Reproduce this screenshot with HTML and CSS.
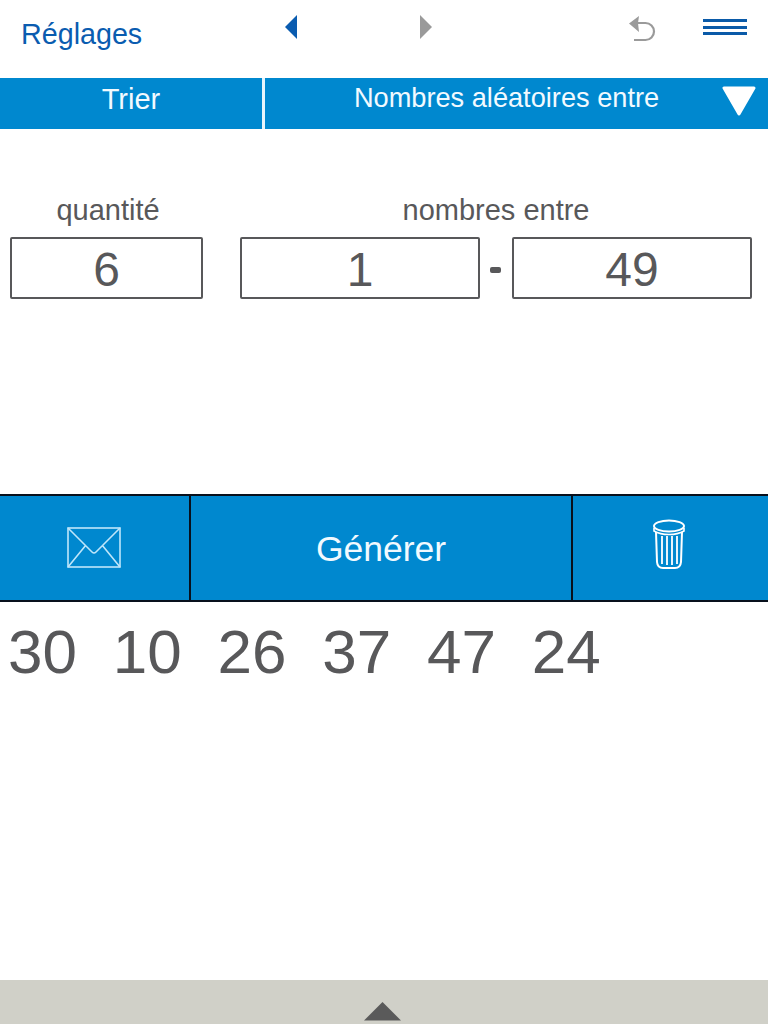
FILE: index.html
```html
<!DOCTYPE html>
<html lang="fr">
<head>
    <meta charset="UTF-8">
    <meta name="viewport" content="width=device-width, initial-scale=1.0">
    <title>Nombres aléatoires</title>
    <link rel="stylesheet" href="styles.css">
</head>
<body>
    <div class="page">
        <div class="toolbar">
            <div class="settings">Réglages</div>
            <svg class="tool" width="14" height="26" viewBox="0 0 14 26"><path d="M13 1V25L1 13Z" fill="#0a5cb0"/></svg>
            <svg class="tool" width="14" height="26" viewBox="0 0 14 26"><path d="M1 1V25L13 13Z" fill="#9a9a9a"/></svg>
            <svg class="tool" width="29" height="28" viewBox="0 0 29 28"><path d="M10 9H18.500A8.500 8.500 0 0 1 18.500 26H7" fill="none" stroke="#9a9a9a" stroke-width="2.200"/><path d="M12 2L11 9L12 18L2 9.500Z" fill="#9a9a9a"/></svg>
            <div class="menu"><span></span><span></span><span></span></div>
        </div>

        <div class="tabs">
            <div class="tab-sort">Trier</div>
            <div class="tab-mode">
                <span class="tab-title">Nombres aléatoires entre</span>
                <svg class="tab-arrow" width="34" height="30" viewBox="0 0 34 30"><path d="M2 2H32L17 28Z" fill="#fff" stroke="#fff" stroke-width="3" stroke-linejoin="round"/></svg>
            </div>
        </div>

        <div class="fields">
            <div class="field-qty">
                <div class="field-label field-label-qty">quantité</div>
                <div class="box">6</div>
            </div>
            <div class="field-range">
                <div class="field-label">nombres entre</div>
                <div class="range-row">
                    <div class="box">1</div>
                    <div class="dash"></div>
                    <div class="box">49</div>
                </div>
            </div>
        </div>

        <div class="actions">
            <div class="action action-mail">
                <svg width="54" height="42" viewBox="0 0 54 42" fill="none" stroke="#bfe6fa" stroke-width="1.600"><rect x="1" y="1" width="52" height="39"/><path d="M1 1L25 25Q27 27 29 25L53 1M1 40L19 18M53 40L35 18"/></svg>
            </div>
            <div class="action action-main">Générer</div>
            <div class="action action-trash">
                <svg width="34" height="52" viewBox="0 0 34 52" fill="none" stroke="#fff" stroke-width="2"><ellipse cx="17" cy="7" rx="15" ry="5.500"/><path d="M2 9V12Q8 15.500 17 15.500Q26 15.500 32 12V9" stroke-width="1.600"/><path d="M4 13L5 43Q5.500 49 11 49H23Q28.500 49 29 43L30 13"/><path d="M10 17V45M15 17V46M20 17V46M25 17V45" stroke-width="1.800"/></svg>
            </div>
        </div>

        <div class="results">
            <span>30</span><span>10</span><span>26</span><span>37</span><span>47</span><span>24</span>
        </div>

        <div class="drawer">
            <svg width="38" height="20" viewBox="0 0 38 20"><path d="M18.500 1L37 19.500H0Z" fill="#5a5a5a"/></svg>
        </div>
    </div>
</body>
</html>
```

FILE: styles.css
```css
body {
    margin: 0;
    font-family: 'Liberation Sans', Arial, sans-serif;
    background: #fff;
    color: #58585a;
}

.page {
    display: flex;
    flex-direction: column;
    height: 100vh;
    overflow: hidden;
}

/* Top bar */
.toolbar {
    display: grid;
    grid-template-columns: 284px 135px 208px 76px 1fr;
    align-items: start;
    height: 78px;
    flex-shrink: 0;
}

.settings {
    padding: 17px 0 0 21px;
    font-size: 28.700px;
    line-height: 34px;
    color: #0a5cb0;
}

.tool {
    display: block;
    margin-top: 14px;
}

.menu {
    display: flex;
    flex-direction: column;
    gap: 3.500px;
    width: 44px;
    margin-top: 19px;
}

.menu span {
    height: 3px;
    background: #0a5aa8;
}

/* Blue tabs */
.tabs {
    display: flex;
    height: 51px;
    flex-shrink: 0;
    background: #0088cf;
    color: #f2faff;
}

.tab-sort {
    width: 262px;
    border-right: 3px solid #e8f5fc;
    font-size: 29px;
    line-height: 43px;
    text-align: center;
}

.tab-mode {
    position: relative;
    flex: 1;
    text-align: center;
    line-height: 40px;
    padding-right: 20px;
}

.tab-title {
    font-size: 27.200px;
}

.tab-arrow {
    position: absolute;
    top: 8px;
    right: 12px;
}

/* Input fields */
.fields {
    display: flex;
    gap: 37px;
    height: 365px;
    flex-shrink: 0;
    padding-left: 10px;
    box-sizing: border-box;
}

.field-qty {
    width: 193px;
}

.field-range {
    width: 512px;
}

.field-label {
    margin-top: 63px;
    margin-bottom: 9px;
    height: 36px;
    font-size: 29px;
    line-height: 36px;
    text-align: center;
}

.field-label-qty {
    padding-left: 3px;
}

.box {
    flex: 1;
    box-sizing: border-box;
    height: 62px;
    border: 2px solid #58585a;
    border-radius: 2px;
    font-size: 48px;
    line-height: 62px;
    text-align: center;
}

.range-row {
    display: flex;
    align-items: center;
}

.dash {
    width: 11px;
    height: 6px;
    margin: 4px 11px 0 10px;
    border-radius: 2px;
    background: #58585a;
}

/* Action bar */
.actions {
    display: grid;
    grid-template-columns: 191px 382px 1fr;
    height: 108px;
    flex-shrink: 0;
    box-sizing: border-box;
    border-top: 2px solid #08101c;
    border-bottom: 2px solid #08101c;
    background: #0088cf;
}

.action {
    display: flex;
    align-items: center;
    justify-content: center;
    border-right: 2px solid #08101c;
}

.action-mail {
    padding-right: 2px;
}

.action-main {
    padding-top: 2px;
    color: #f2faff;
    font-size: 35.500px;
}

.action-trash {
    padding: 0 4px 6px 0;
    border-right: 0;
}

/* Generated numbers */
.results {
    display: flex;
    gap: 35.800px;
    flex: 1;
    padding: 12px 0 0 8px;
    font-size: 62px;
    line-height: 76px;
}

/* Bottom drawer */
.drawer {
    display: flex;
    align-items: flex-end;
    justify-content: center;
    height: 44px;
    flex-shrink: 0;
    background: #d0d0c8;
    padding: 0 2px 3px 0;
    box-sizing: border-box;
}
```
